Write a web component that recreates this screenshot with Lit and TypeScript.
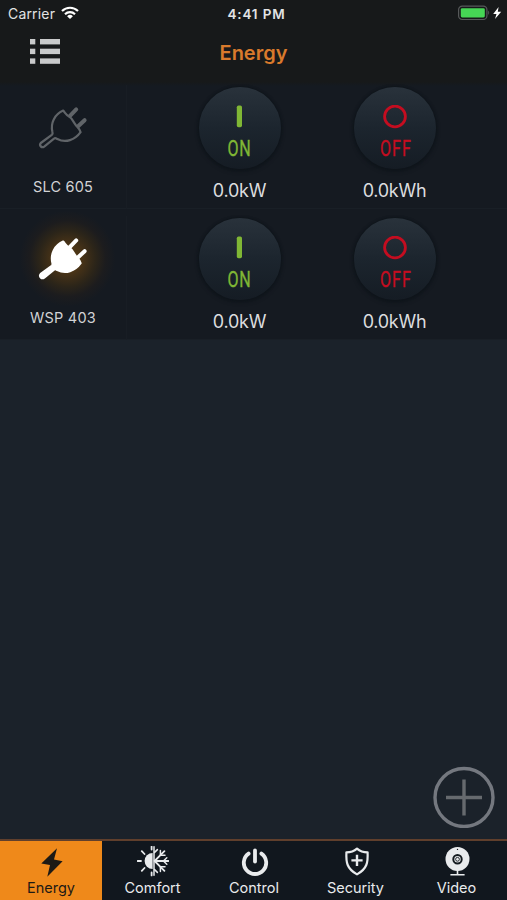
import { LitElement, html, svg, css } from "lit";
import { customElement, property } from "lit/decorators.js";
import { classMap } from "lit/directives/class-map.js";

const PLUG_BODY =
  "M63.2 110.6 C65 112.6 66 115 69 116.4 C72.2 118.4 73.4 122 75.6 124.8 C77.2 127.2 79.8 128.6 80.6 132.2 C75 140 65.5 143.4 57.4 139 C55.8 138.2 55.2 137.6 54 138.7 L44.2 146.6 C41.6 148.4 38.8 145.4 40.8 143 L51.8 134.8 C53 133.8 52.8 133 52.4 131.8 C50.4 123 54.4 114.6 63.2 110.6 Z";

const icons: Record<string, unknown> = {
  Energy: svg`<path d="M57 848.3 L41.3 863.4 L50 865 L47.3 876.8 L62.6 861.2 L54 859.4 Z" fill="currentColor"/>`,
  Comfort: svg`
    <path d="M152.6 853 A8 8 0 0 0 152.6 869 Z" fill="currentColor"/>
    <g fill="none" stroke="currentColor" stroke-width="1.8" stroke-linecap="round">
      <path d="M137.7 861 H141 M141.8 851.2 L144.5 854 M141.8 870.8 L144.5 868 M151.6 846.6 V849.6 M151.6 872.4 V875.4"/>
      <path d="M154 846.8 V875.2" stroke-width="1.5"/>
      <path d="M154.6 861 H168.6 M154.6 861 L164.4 851.2 M154.6 861 L164.4 870.8"/>
      <path d="M154.6 852.4 L157.4 849.6 M154.6 869.6 L157.4 872.4 M160.4 850.6 V855.2 H165 M160.4 871.4 V866.8 H165 M166.8 857.8 L163.4 861 L166.8 864.2" stroke-width="1.5"/>
    </g>`,
  Control: svg`
    <path d="M248.6 853.6 A11.2 11.2 0 1 0 261.4 853.6" fill="none" stroke="currentColor" stroke-width="3.8" stroke-linecap="round"/>
    <path d="M255 850.4 V861.6" stroke="currentColor" stroke-width="3.8" stroke-linecap="round"/>`,
  Security: svg`
    <path d="M357 848.6 C354 851.3 350.5 852.4 346.4 852.4 C346 862 346.5 868.4 357 874.4 C367.5 868.4 368 862 367.6 852.4 C363.5 852.4 360 851.3 357 848.6 Z" fill="none" stroke="currentColor" stroke-width="2.2" stroke-linejoin="round"/>
    <path d="M357 854.8 V866 M351.4 860.4 H362.6" stroke="currentColor" stroke-width="2.4"/>`,
  Video: svg`
    <circle cx="457.5" cy="859" r="12" fill="currentColor"/>
    <path d="M457.5 870 V874.6 M450.4 874.7 H464.6" stroke="currentColor" stroke-width="1.6"/>
    <circle cx="457.5" cy="859.3" r="4.2" fill="none" stroke="#151b20" stroke-width="2"/>
    <circle cx="457.5" cy="859.3" r="1.9" fill="none" stroke="#151b20" stroke-width=".9"/>
    <circle cx="457.5" cy="849.4" r=".7" fill="#151b20"/>`,
};

const TABS = [
  { name: "Energy", box: "35 846 32 32" },
  { name: "Comfort", box: "137 846 32 32" },
  { name: "Control", box: "238 846 32 32" },
  { name: "Security", box: "340 846 32 32" },
  { name: "Video", box: "441 846 32 32" },
];

@customElement("status-bar")
class StatusBar extends LitElement {
  static styles = css`
    :host { display: grid; grid-template-columns: 1fr auto 1fr; align-items: center; height: 27px; color: #e2e3e4; font-size: 14px; line-height: 18px; }
    .left { display: flex; align-items: center; gap: 6px; padding-left: 8px; letter-spacing: 0.18px; }
    .time { font-weight: 600; font-size: 13.5px; letter-spacing: 0.85px; padding-left: 6px; }
    .right { display: flex; align-items: center; justify-content: flex-end; padding-right: 5px; }
    svg { display: block; }
    .left svg { margin-top: -2px; }
    .right svg { margin-top: -1px; }
  `;
  render() {
    return html`
      <div class="left">
        <span>Carrier</span>
        <svg width="18" height="14" viewBox="0 0 18 14">
          <g fill="none" stroke="#fff" stroke-width="2.2">
            <path d="M1 5 A11.5 11.5 0 0 1 17 5"/>
            <path d="M4 8.2 A7.2 7.2 0 0 1 14 8.2"/>
          </g>
          <path d="M9 13 L6.1 10.2 A4.2 4.2 0 0 1 11.9 10.2 Z" fill="#fff"/>
        </svg>
      </div>
      <span class="time">4:41 PM</span>
      <div class="right">
        <svg width="44" height="16" viewBox="0 0 44 16">
          <rect x=".6" y="1.1" width="28.3" height="13.4" rx="3.6" fill="none" stroke="#57595a" stroke-width="1.2"/>
          <rect x="2.8" y="3.2" width="24" height="9.2" rx="1.4" fill="#46d655"/>
          <path d="M30.2 5.6 Q32.2 7.8 30.2 10 Z" fill="#57595a"/>
          <path d="M40.6 2 L35.2 9 H38.5 L37 14 L43.2 6.8 H39.8 Z" fill="#fff"/>
        </svg>
      </div>`;
  }
}

@customElement("power-button")
class PowerButton extends LitElement {
  @property({ type: Boolean }) off = false;
  @property() reading = "";
  static styles = css`
    :host { display: flex; flex-direction: column; align-items: center; width: 120px; }
    .disc { box-sizing: border-box; width: 82px; height: 82px; border-radius: 50%; padding-top: 18px; display: flex; flex-direction: column; align-items: center; background: linear-gradient(#29323b, #1c252e 50%, #151c24); box-shadow: 0 0 2px 1px #0f151b, 0 2px 4px #0e141a; color: #80b735; }
    .disc.off { color: #c40d20; }
    svg { display: block; }
    .word { font: 400 22px/22px Roboto, sans-serif; margin-top: 9px; transform: scaleX(0.73); letter-spacing: 1px; margin-right: 1px; -webkit-text-stroke: 0.35px currentColor; }
    .off .word { letter-spacing: 1.5px; margin-right: -1.5px; margin-left: 2px; }
    .reading { margin-top: 10px; font-size: 18px; line-height: 24px; letter-spacing: -0.25px; color: #dcdddf; }
  `;
  render() {
    return html`
      <div class=${classMap({ disc: true, off: this.off })}>
        <svg width="26" height="24" viewBox="0 0 26 24">
          ${this.off
            ? svg`<circle cx="13" cy="11.5" r="10.4" fill="none" stroke="currentColor" stroke-width="2.8"/>`
            : svg`<rect x="9.8" y=".6" width="5.2" height="21.6" rx="1.7" fill="currentColor"/>`}
        </svg>
        <span class="word">${this.off ? "OFF" : "ON"}</span>
      </div>
      <span class="reading">${this.reading}</span>`;
  }
}

@customElement("device-row")
class DeviceRow extends LitElement {
  @property() name = "";
  @property({ type: Boolean }) lit = false;
  static styles = css`
    :host { display: flex; align-items: flex-end; box-sizing: border-box; height: 131px; padding-bottom: 6px; background: #151a21; box-shadow: inset 0 -1px #191f26; }
    .device { width: 126px; height: 124px; margin-bottom: -6px; display: flex; flex-direction: column; align-items: center; box-shadow: 1px 0 #181d24; }
    .icon { display: grid; place-items: center; width: 110px; height: 99px; margin-top: -7px; }
    .icon.lit { background: radial-gradient(circle at 54% 50%, #553b14 0, #4a3417 14px, #2c2519 28px, #1c1c1e 38px, transparent 48px); }
    .name { font-size: 14.5px; line-height: 20px; letter-spacing: 0.2px; color: #d2d3d5; }
    .on { margin-left: 53.5px; }
    .off { margin-left: 35px; }
  `;
  render() {
    return html`
      <div class="device">
        <div class=${classMap({ icon: true, lit: this.lit })}>
          <svg width="54" height="48" viewBox="36 104 54 48" stroke-linecap="round" stroke-linejoin="round">
            <path d=${PLUG_BODY} fill=${this.lit ? "#fff" : "none"} stroke=${this.lit ? "#fff" : "#606468"} stroke-width="2.2"/>
            <path d="M70 115.8 L76.2 109.4 M78.4 126 L84.6 120.2" fill="none" stroke=${this.lit ? "#fff" : "#606468"} stroke-width="4"/>
          </svg>
        </div>
        <span class="name">${this.name}</span>
      </div>
      <power-button class="on" reading="0.0kW"></power-button>
      <power-button class="off" off reading="0.0kWh"></power-button>`;
  }
}

@customElement("app-root")
class AppRoot extends LitElement {
  static styles = css`
    :host { display: flex; flex-direction: column; width: 507px; height: 900px; overflow: hidden; background: #1b222a; font-family: Inter, "Liberation Sans", sans-serif; }
    header { height: 78px; background: #17191a; }
    .nav { display: grid; grid-template-columns: 1fr auto 1fr; align-items: center; height: 51px; }
    .menu { margin-left: 30px; margin-top: -1px; display: block; }
    h1 { margin: 0; font-weight: 600; font-size: 20px; line-height: 26px; color: #d97a2c; }
    .first { background: linear-gradient(#17191a 4px, #151a21 8px); }
    main { flex: 1; display: flex; flex-direction: column; justify-content: flex-end; align-items: flex-end; padding: 0 12px 11px 0; }
    .add { display: block; }
    nav { display: grid; grid-template-columns: 102px 101px 102px 101px 101px; height: 61px; box-sizing: border-box; border-top: 2px solid #603f2c; background: #11171e; }
    .tab { display: flex; flex-direction: column; align-items: center; padding-top: 5px; color: #e9ebed; }
    .tab.active { background: #ef891a; color: #1d1a15; }
    .tab svg { display: block; }
    .tab span { font-size: 14.5px; line-height: 18px; margin-top: 1px; }
  `;
  render() {
    return html`
      <header>
        <status-bar></status-bar>
        <div class="nav">
          <svg class="menu" width="30" height="26" viewBox="0 0 30 26" fill="#c9cacb">
            ${[0, 9.7, 19.4].map((y) => svg`<rect x="0" y=${y} width="5.3" height="5.4"/><rect x="10" y=${y} width="20" height="5.4"/>`)}
          </svg>
          <h1>Energy</h1>
        </div>
      </header>
      <device-row class="first" name="SLC 605"></device-row>
      <device-row name="WSP 403" lit></device-row>
      <main>
        <svg class="add" width="62" height="62" viewBox="0 0 62 62" fill="none">
          <circle cx="31" cy="31.5" r="29" stroke="#74787f" stroke-width="3.4"/>
          <path d="M31 13.5 V49.5 M13 31.5 H49" stroke="#666a6e" stroke-width="3.4"/>
        </svg>
      </main>
      <nav>
        ${TABS.map(
          (t, i) => html`<div class=${classMap({ tab: true, active: i === 0 })}>
            <svg width="32" height="32" viewBox=${t.box}>${icons[t.name]}</svg>
            <span>${t.name}</span>
          </div>`
        )}
      </nav>`;
  }
}
